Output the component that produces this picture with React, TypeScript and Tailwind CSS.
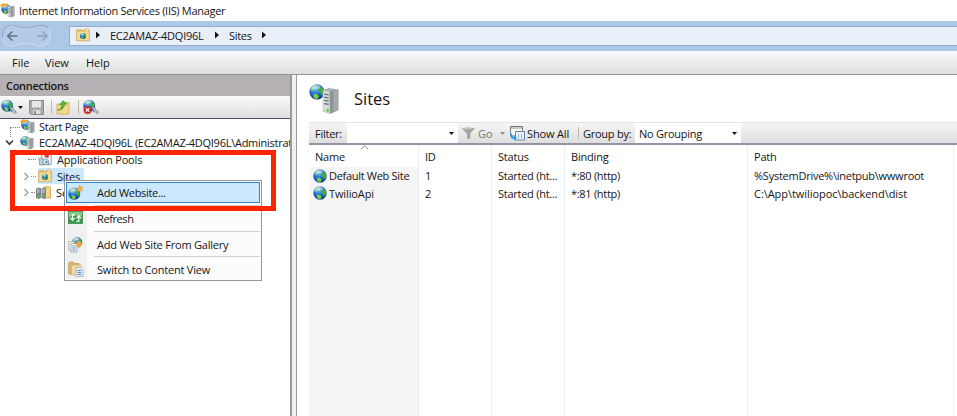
import React from "react";

function Globe({ x = 0, y = 0, s = 16 }: { x?: number; y?: number; s?: number }) {
  return (
    <svg x={x} y={y} width={s} height={s} viewBox="0 0 16 16">
      <defs>
        <radialGradient id="sea" cx="0.4" cy="0.2" r="0.85">
          <stop offset="0" stopColor="#a5d5f7" />
          <stop offset="0.45" stopColor="#2c78d4" />
          <stop offset="1" stopColor="#0c2a80" />
        </radialGradient>
      </defs>
      <circle cx="8" cy="8" r="7.5" fill="url(#sea)" stroke="#53739c" strokeWidth="0.4" />
      <path d="M3 3.2Q6 .8 8.4 2L7.5 3.6 5.4 4.4 4.4 6 2.6 6.5 1.8 5.5Z" fill="#8fd8a0" />
      <path d="M10 3.6 12.6 3 14.9 6.8 14.6 10 12.6 12 11.6 9.3 9.5 8.2 9 6Z" fill="#3fae46" />
      <path d="M4 10.3 7.6 10 10 12.2 8.2 14.9 5.2 14.2Z" fill="#6fd640" />
      <ellipse cx="7" cy="3.2" rx="4.2" ry="1.9" fill="#fff" opacity=".35" />
    </svg>
  );
}

function Tower({ x = 0, y = 0, w = 8, h = 13 }: { x?: number; y?: number; w?: number; h?: number }) {
  return (
    <svg x={x} y={y} width={w} height={h} viewBox="0 0 8 13" preserveAspectRatio="none">
      <path d="M0 1.2 3 0 8 .7V11L4 13 0 11.8Z" fill="#a9b0b2" />
      <path d="M.3 1.3 3.6 1.8V12.6L.3 11.6Z" fill="#d5dadc" />
      <path d="M3.6 1.8 8 .8V11L3.8 12.8Z" fill="#8e9496" />
      <path d="M5.5 1.4 8 .8V11L5.5 12Z" fill="#a4a9aa" />
      <path d="M.9 3 3.1 3.4M.9 4.6 3.1 5M.9 6.2 3.1 6.6M.9 7.8 3.1 8.2" stroke="#5c686d" strokeWidth=".6" />
      <circle cx="2.6" cy="11.2" r=".7" fill="#61ca36" />
    </svg>
  );
}

function ServerIcon({ star = false }: { star?: boolean }) {
  return (
    <svg width="15" height="15" viewBox="0 0 15 15" className="shrink-0">
      <Globe x={1} y={1} s={10} />
      <Tower x={7.5} y={2.5} w={7} h={12} />
      {star && <path d="M0 2 2 1 3.5 0 5 .8 8 .6 6.5 2.4 5 3.6 3 3.4 1.4 5.4 1 3.6Z" fill="#f3a82d" />}
    </svg>
  );
}

function SitesIcon() {
  return (
    <svg width="14" height="14" viewBox="0 0 14 14" className="shrink-0">
      <path d="M.6 2.7 1 1.8H5.5L6.5 2.5H8L9 1H12.5L13.4 2.5V12.8H.6Z" fill="#e9bd5e" stroke="#c59b49" strokeWidth=".6" />
      <path d="M1.2 3.6H12.8V12.2H1.2Z" fill="#f6dc92" />
      <path d="M9.5 1.4H12.2V3H9.5Z" fill="#fff0b4" />
      <Globe x={3.8} y={4.8} s={6.4} />
    </svg>
  );
}

function PoolsIcon() {
  return (
    <svg width="14" height="14" viewBox="0 0 14 14" className="shrink-0">
      <path d="M3.5 1H10L13.3 3.5V12.5H3.5Z" fill="#edf2f8" stroke="#8997a8" strokeWidth=".8" />
      <path d="M.8 6.2H5L6 13H1.6Z" fill="#c2ced8" stroke="#627588" strokeWidth=".6" />
      <path d="M4.8 9.4Q7.2 5.2 10.4 8.6L11 12.6H5.6Z" fill="#e5f0f5" stroke="#587b94" strokeWidth=".7" />
      <path d="M6 4 9 1.6 11 3.4 10.3 6 7.6 5.4Z" fill="#d64a3c" />
      <circle cx="8.3" cy="10" r="1.5" fill="#5f9fc4" />
    </svg>
  );
}

function FarmIcon() {
  return (
    <svg width="15" height="14" viewBox="0 0 15 14" className="shrink-0">
      <path d="M7 2 9 .5 14.5 1V12H7Z" fill="#f2d58a" stroke="#c49b4c" strokeWidth=".7" />
      <path d="M0 3 2 1.5 5 2V12L3 13 0 12Z" fill="#7b858b" />
      <path d="M5.5 3 7.5 1.5 10 2V12L8.5 13 5.5 12Z" fill="#7b858b" />
      <path d="M1 4H3.5M1 6H3.5M6.3 4H8.8M6.3 6H8.8" stroke="#dae0e2" />
      <path d="M1.2 9.7H3.2M6.5 9.7H8.5" stroke="#5acb3b" strokeWidth="1.6" />
    </svg>
  );
}

function Tri({ muted = false }: { muted?: boolean }) {
  return (
    <svg width="5" height="3" viewBox="0 0 5 3" className="shrink-0">
      <path d="M0 0H5L2.5 3Z" fill={muted ? "#8e8e8e" : "#111"} />
    </svg>
  );
}

function RightTri() {
  return (
    <svg width="4" height="8" viewBox="0 0 4 8" className="shrink-0">
      <path d="M0 .5 4 4 0 7.5Z" fill="#111" />
    </svg>
  );
}

function NavButtons() {
  return (
    <svg width="52" height="28" viewBox="0 0 52 28" className="-mt-px shrink-0">
      <path d="M2.5 15C1.5 6 7 2.5 13 3Q20 5.5 26 5.5 33 5.5 38 3.5C47 1.5 51.5 7 50 15 48 24 41 25.5 36 23Q26 20 17 23C9 26.5 3.5 23 2.5 15Z" fill="#b4cbe6" stroke="#c3d6ec" strokeWidth="1.4" />
      <path d="M2.5 16C1.5 6 7 2.5 13 3Q20 5.5 26 5.5 33 5.5 38 3.5 45 2 48.5 6.5" fill="none" stroke="#8fa5c0" strokeWidth="1.1" />
      <path d="M17.5 14H8M12.3 9.5 7.8 14 12.3 18.5" fill="none" stroke="#62748a" strokeWidth="1.7" />
      <path d="M37 14H46.5M42.4 9.5 46.9 14 42.4 18.5" fill="none" stroke="#8fa3bb" strokeWidth="1.5" />
    </svg>
  );
}

function ConnectIcon({ stop = false }: { stop?: boolean }) {
  return (
    <svg width="16" height="16" viewBox="0 0 16 16" className="shrink-0">
      <Globe x={0} y={0.5} s={12.5} />
      <path d="M9 9 11.5 9.5 11 12 14 12.5 14.6 14.6" fill="none" stroke="#6c8190" strokeWidth="2.2" />
      <path d="M9 9 11.5 9.5 11 12 14 12.5 14.6 14.6" fill="none" stroke="#c7d8e2" strokeWidth="1" />
      {stop && <><circle cx="4.6" cy="11" r="4.1" fill="#c72e35" /><path d="m3 9.4 3.2 3.2m0-3.2L3 12.6" stroke="#fff" strokeWidth="1.3" /></>}
    </svg>
  );
}

function SaveIcon() {
  return (
    <svg width="15" height="15" viewBox="0 0 15 15" className="shrink-0">
      <path d="M.5.5H14.5V14.5H2L.5 13Z" fill="#a8a8a8" stroke="#8c8c8c" />
      <path d="M3 1H12V7.5H3Z" fill="#e6e6e6" /><path d="M4 10H11.5V14H4Z" fill="#dedede" /><path d="M5 11H7V14H5Z" fill="#888" />
    </svg>
  );
}

function UpIcon() {
  return (
    <svg width="14" height="15" viewBox="0 0 14 15" className="shrink-0">
      <path d="M1 4H6L7.5 2.5H13V14H1Z" fill="#f3d88c" stroke="#d0a855" strokeWidth=".8" />
      <path d="M1.5 10C5 9.6 5.6 7 5.8 4.4L3.4 5 7 .6 11 4 8.6 4.2C8.2 8 6 10.6 1.5 10Z" fill="#59b834" stroke="#358a20" strokeWidth=".5" />
    </svg>
  );
}

function MenuIcon({ kind }: { kind: string }) {
  return (
    <svg width="16" height="16" viewBox="0 0 16 16" className="shrink-0">
      {kind === "add" && <><Globe x={0} y={2.4} s={12.6} /><path d="m11.5 0 1.1 1.8 2.4.2-1.4 2 .8 2.3-2.4-.6-2 1.3V4.7L8.3 3.2 10.7 2.3Z" fill="#f3aa42" stroke="#e2963a" strokeWidth=".4" /></>}
      {kind === "refresh" && <><rect x=".5" y="1.5" width="14" height="12" fill="#2f9e3e" stroke="#5d9166" /><path d="M1 2H14V6Q7 4.6 1 7Z" fill="#83cc85" /><path d="M6.7 4.6H4.5V10M2.3 7.8 4.5 10.4 6.8 7.8M8.3 11.4H10.8V6M8.5 8.4 10.8 5.6 13.1 8.4" fill="none" stroke="#fff" strokeWidth="1.2" /></>}
      {kind === "gallery" && <><Globe x={4} y={0} s={10.5} /><path d="M.8 4.5H6.4V13H.8Z" fill="#f5f2ea" stroke="#a8a394" strokeWidth=".7" /><path d="M3 6.5H7.4L9 8V15H3Z" fill="#eef3f8" stroke="#8999a7" strokeWidth=".7" /><path d="M4.4 9H7.4M4.4 11H7.4M4.4 13H7.4" stroke="#6087b3" strokeWidth=".9" /><path d="m7.6 6.4 3.4-3 3.4 3.6-2.8 4-2.6-1Z" fill="#eda34d" /></>}
      {kind === "content" && <><path d="M.6 2.4 1.4 1 5.6 1 6.8 2.5H11V13H.6Z" fill="#d8b774" stroke="#b99a5c" strokeWidth=".7" /><path d="M3.5 4H13V14H3.5Z" fill="#f3dba0" stroke="#c9a766" strokeWidth=".6" /><path d="M8 6.5H12.4L15 8.6V15.4H8Z" fill="#edf5fa" stroke="#8fa3b6" strokeWidth=".7" /><path d="M9.5 9.4H13.3M9.5 11.4H13.3M9.5 13.4H13.3" stroke="#4185c9" /></>}
    </svg>
  );
}

function Chevron({ open = false }: { open?: boolean }) {
  return (
    <svg width="9" height="9" viewBox="0 0 9 9" className="shrink-0">
      <path d={open ? "M1 2.5 4.5 6.2 8 2.5" : "M2.5 1 6 4.5 2.5 8"} fill="none" stroke={open ? "#424242" : "#a0a0a0"} strokeWidth={open ? 1.7 : 1.3} />
    </svg>
  );
}

const menu = [
  { kind: "refresh", label: "Refresh", row: "mt-[2px] h-[26px]", track: "tracking-[-0.4px]" },
  { kind: "gallery", label: "Add Web Site From Gallery", row: "h-[25px] pt-0.5", track: "tracking-[-0.21px]" },
  { kind: "content", label: "Switch to Content View", row: "h-[23px] pt-[3px]", track: "tracking-[-0.2px]" },
];

function ContextMenu() {
  return (
    <div className="absolute left-16 top-[180px] h-[101px] w-[198px] border border-[#969696] bg-[#fcfcfc] p-px">
      <div className="flex h-full flex-col bg-[linear-gradient(90deg,#f0f0f0_21px,#fcfcfc_21px)]">
        <div className="flex h-[21px] shrink-0 items-center border border-[#2b85d2] bg-[#cce8ff] pl-px">
          <MenuIcon kind="add" /><span className="ml-[13px] tracking-[-0.32px]">Add Website...</span>
        </div>
        {menu.map((m) => (
          <div key={m.kind} className={"relative flex shrink-0 items-center pl-[2px] " + m.row}>
            <div className="absolute left-7 right-0 top-0 h-px bg-[#d4d2d0]" />
            <MenuIcon kind={m.kind} /><span className={"ml-[13px] whitespace-nowrap " + m.track}>{m.label}</span>
          </div>
        ))}
      </div>
    </div>
  );
}

function Connections() {
  return (
    <aside className="flex w-[292px] shrink-0 flex-col overflow-hidden border-r-2 border-[#999] bg-white">
      <div className="flex h-[21px] items-center bg-[#b5b0b4] pl-1.5 font-semibold tracking-[-0.3px]">Connections</div>
      <div className="flex h-[23px] shrink-0 items-center border-b border-[#4c4d76] bg-gradient-to-b from-[#fafafa] to-[#dfdfdf] pl-px">
        <ConnectIcon /><span className="w-px" /><Tri /><span className="w-1.5" /><SaveIcon />
        <span className="ml-[7px] mr-1 h-3.5 w-px bg-[#bcbaac]" /><UpIcon />
        <span className="ml-2 mr-1 h-3.5 w-px bg-[#bcbaac]" /><ConnectIcon stop />
      </div>
      <div className="flex flex-col">
        <div className="flex h-[15.6px] items-center pl-2.5">
          <span className="mt-2.5 h-2.5 w-[10px] border-l border-t border-dotted border-[#888]" />
          <ServerIcon star /><span className="ml-1 tracking-[-0.28px]">Start Page</span>
        </div>
        <div className="flex h-[16.6px] items-center pl-[5px]">
          <Chevron open /><span className="ml-1 mr-px w-1 border-t border-dotted border-[#888]" /><ServerIcon />
          <span className="ml-[5px] whitespace-nowrap tracking-[-0.26px]">EC2AMAZ-4DQI96L (EC2AMAZ-4DQI96L\Administrator)</span>
        </div>
        <div className="flex h-[16.6px] items-center pl-7">
          <span className="mr-0.5 h-px w-2 border-t border-dotted border-[#888]" /><PoolsIcon />
          <span className="ml-[5px] tracking-[-0.17px]">Application Pools</span>
        </div>
        <div className="flex h-[16.6px] items-center pl-[22px]">
          <Chevron /><span className="mr-0.5 w-[5px] border-t border-dotted border-[#888]" />
          <span className="flex h-[16px] items-center bg-[#cce8ff] pr-1"><SitesIcon /><span className="ml-[5px] tracking-[-0.25px]">Sites</span></span>
        </div>
        <div className="flex h-[16.6px] items-center pl-[22px]">
          <Chevron /><span className="mr-px w-[4px] border-t border-dotted border-[#888]" /><FarmIcon /><span className="ml-[5px]">Server Farms</span>
        </div>
      </div>
    </aside>
  );
}

const sites = [
  ["Default Web Site", "1", "Started (ht...", "*:80 (http)", "%SystemDrive%\\inetpub\\wwwroot"],
  ["TwilioApi", "2", "Started (ht...", "*:81 (http)", "C:\\App\\twiliopoc\\backend\\dist"],
];

const cellTracking = [
  ["tracking-[-0.3px]", "", "tracking-[-0.26px]", "tracking-[-0.3px]", "tracking-[-0.25px]"],
  ["tracking-[-0.12px]", "", "tracking-[-0.26px]", "tracking-[-0.3px]", "tracking-[-0.05px]"],
];

function SitesTable() {
  return (
    <div className="relative grid flex-1 grid-cols-[110px_73px_73px_183px_206px_3px]">
      {["Name", "ID", "Status", "Binding", "Path"].map((h, c) => (
        <div key={h} className="flex flex-col border-r border-[#e9f0fa]">
          <div className="relative flex h-[22px] shrink-0 items-center pl-1.5 tracking-[-0.2px]">
            {h}
            {c === 0 && <svg className="absolute left-[51px] top-0" width="9" height="5"><path d="M1 4 4.5 1 8 4" fill="none" stroke="#8b8b8b" /></svg>}
          </div>
          <div className={c === 0 ? "flex-1 bg-[#f5f5f5]" : "flex-1"}>
            {sites.map((r, i) => (
              <div key={r[0]} className={"flex h-[17.6px] items-center whitespace-nowrap " + cellTracking[i][c] + (c === 0 ? " pl-1" : " pl-1.5")}>
                {c === 0 && <svg width="14" height="14" className="mr-[2px] shrink-0"><Globe s={14} /></svg>}
                {r[c]}
              </div>
            ))}
          </div>
        </div>
      ))}
    </div>
  );
}

function Content() {
  return (
    <main className="flex min-w-0 flex-1 flex-col border-l border-[#999] bg-white pl-3">
      <div className="flex h-[47px] shrink-0 items-center">
        <svg width="31" height="31" viewBox="0 0 31 31"><Globe x={0} y={1} s={16} /><Tower x={13.5} y={5} w={16} h={26} /></svg>
        <span className="ml-3.5 text-[16.5px] tracking-[0px]">Sites</span>
      </div>
      <div className="flex h-[23px] shrink-0 items-center border-b-2 border-t border-b-[#9691a9] border-t-[#e3e3e3] bg-gradient-to-b from-[#f6f6f6] to-[#dedede]">
        <span className="w-[38px] shrink-0 pl-1.5 tracking-[-0.25px]">Filter:</span>
        <span className="flex h-full w-[111px] shrink-0 items-center justify-end bg-white pr-1"><Tri /></span>
        <svg width="13" height="13" viewBox="0 0 14 13" className="ml-1 shrink-0"><path d="M0 1Q7-1 14 1L9 6V11L5.5 13V7Z" fill="#a5a5a5" /><path d="M2 1.4H11" stroke="#d1d1d1" /></svg>
        <span className="ml-[3px] w-[22px] shrink-0 text-[#777]">Go</span><Tri muted />
        <svg width="15" height="15" viewBox="0 0 15 15" className="ml-[5px] shrink-0"><path d="M.5.5H12.5V10H.5Z" fill="#f8f8f8" stroke="#777" /><path d="M1 2H12" stroke="#999" /><path d="M5.5 5.5H14.5V14H5.5Z" fill="#eef3fb" stroke="#6984ac" /><path d="M8 9H9M11 9H12M8 11H9M11 11H12" stroke="#4466a6" /><path d="M1 7.5Q1 12 4 12" fill="none" stroke="#369de0" strokeWidth="2" /><path d="m4 9 3 3-3 3Z" fill="#369de0" /></svg>
        <span className="ml-[2px] w-[44px] shrink-0 whitespace-nowrap tracking-[-0.15px]">Show All</span>
        <span className="ml-[7px] mr-1 h-3 w-px shrink-0 bg-[#bcbaac]" />
        <span className="w-[52px] shrink-0 whitespace-nowrap tracking-[-0.25px]">Group by:</span>
        <span className="flex h-full w-[106px] shrink-0 items-center justify-between bg-white pl-1 pr-1 tracking-[-0.25px]">No Grouping<Tri /></span>
      </div>
      <SitesTable />
    </main>
  );
}

export default function App() {
  return (
    <div className="relative flex h-[416px] w-[957px] flex-col overflow-hidden bg-white font-['Open_Sans',sans-serif] text-[11px] leading-[15px] text-[#151515]">
      <header className="flex h-[21px] shrink-0 items-center"><ServerIcon star /><span className="ml-1 tracking-[-0.31px]">Internet Information Services (IIS) Manager</span></header>
      <div className="flex h-[30px] shrink-0 items-center bg-[#adc8e6]">
        <NavButtons />
        <div className="-mt-px ml-[17px] flex h-5 flex-1 items-center border border-r-0 border-[#92add0] bg-[#e8eff8] pb-px pl-1.5">
          <SitesIcon /><span className="w-[6px]" /><RightTri />
          <span className="ml-[10px] w-[105px] shrink-0 whitespace-nowrap tracking-[-0.24px]">EC2AMAZ-4DQI96L</span><RightTri />
          <span className="ml-[10px] w-[25px] tracking-[-0.3px]">Sites</span><span className="w-[8px]" /><RightTri />
        </div>
      </div>
      <nav className="flex h-6 shrink-0 items-center border-b border-[#959595] bg-gradient-to-b from-[#fbfbfb] to-[#dedede] pb-px pl-3">
        <span className="w-[33px]">File</span><span className="w-[41px] tracking-[-0.1px]">View</span><span>Help</span>
      </nav>
      <div className="flex min-h-0 flex-1">
        <Connections />
        <div className="w-1 shrink-0 bg-[#f0f0f0]" />
        <Content />
      </div>
      <ContextMenu />
      <div className="absolute left-2.5 top-[150px] h-[61px] w-[266px] border-[5px] border-[#fb2500]" />
    </div>
  );
}
